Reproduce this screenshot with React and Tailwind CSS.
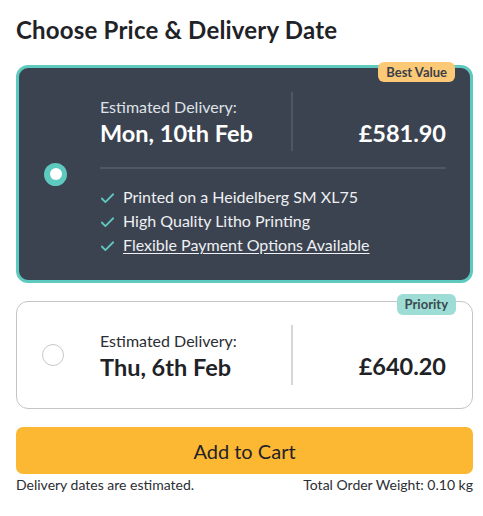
import { Check } from "lucide-react";

const font = { fontFamily: "Lato, 'Noto Sans', sans-serif" };

const features = [
  { text: "Printed on a Heidelberg SM XL75" },
  { text: "High Quality Litho Printing" },
  { text: "Flexible Payment Options Available", link: true },
];

const App = () => {
  return (
    <div
      className="w-[483px] h-[516px] bg-white pl-4 pr-[10px] pt-[15px] text-[#1f2227]"
      style={font}
    >
      <h1 className="text-[24px] leading-[30px] font-bold tracking-[0.2px]">
        Choose Price &amp; Delivery Date
      </h1>

      {/* selected option */}
      <div className="relative mt-[20px] h-[218px] rounded-[12px] border-[3px] border-[#5ec9bf] bg-[#3c4350]">
        <span className="absolute right-[15px] top-[-6px] rounded-[6px] bg-[#fcc977] px-[8px] text-[13px] leading-[20px] font-bold text-[#3a3f49]">
          Best Value
        </span>
        <div className="flex h-full">
          <div className="flex w-[81px] items-center pl-[25px]">
            <span className="flex h-[23px] w-[23px] items-center justify-center rounded-full bg-[#5ec9bf]">
              <span className="h-[12px] w-[12px] rounded-full bg-white" />
            </span>
          </div>
          <div className="flex-1 pr-[24px] pt-[24px]">
            <div className="flex h-[59px] items-stretch">
              <div className="flex w-[191px] flex-col justify-center">
                <p className="text-[16px] leading-[20px] text-[#dfe2e7]">Estimated Delivery:</p>
                <p className="mt-[3px] text-[23.5px] leading-[26px] font-bold text-white">
                  Mon, 10th Feb
                </p>
              </div>
              <div className="w-[2px] bg-[#4e5767]" />
              <div className="flex flex-1 items-center justify-end pt-[22px]">
                <span className="text-[23.5px] leading-[26px] font-bold text-white">£581.90</span>
              </div>
            </div>
            <div className="mt-[16px] h-[2px] bg-[#4e5767]" />
            <ul className="mt-[16px] flex flex-col">
              {features.map((f) => (
                <li key={f.text} className="flex items-center gap-[7px] text-[16px] leading-[24px] text-[#eef0f3]">
                  <Check size={17} strokeWidth={2.5} className="-ml-[1px] mt-[3px] text-[#5ec9bf]" />
                  <span className={f.link ? "underline underline-offset-2" : ""}>{f.text}</span>
                </li>
              ))}
            </ul>
          </div>
        </div>
      </div>

      {/* other option */}
      <div className="relative mt-[18px] h-[108px] rounded-[12px] border border-[#c4c4c4] bg-white">
        <span className="absolute right-[16px] top-[-8px] rounded-[6px] bg-[#9edcd6] px-[8px] text-[13px] leading-[21px] font-bold text-[#3a4a4c]">
          Priority
        </span>
        <div className="flex h-full">
          <div className="flex w-[83px] items-center pl-[25px]">
            <span className="h-[22px] w-[22px] rounded-full border border-[#c8c8c8]" />
          </div>
          <div className="flex flex-1 items-center pr-[26px]">
            <div className="flex h-[60px] flex-1 items-stretch">
              <div className="flex w-[191px] flex-col justify-center">
                <p className="text-[16px] leading-[20px] text-[#2b2e33]">Estimated Delivery:</p>
                <p className="mt-[3px] text-[23.5px] leading-[26px] font-bold">Thu, 6th Feb</p>
              </div>
              <div className="w-[2px] bg-[#d6d6d6]" />
              <div className="flex flex-1 items-center justify-end pt-[22px]">
                <span className="text-[23.5px] leading-[26px] font-bold">£640.20</span>
              </div>
            </div>
          </div>
        </div>
      </div>

      <button className="mt-[18px] h-[47px] w-full rounded-[7px] bg-[#fdb833] text-[20px] text-[#1f2227]">
        Add to Cart
      </button>
      <div className="mt-[3px] flex justify-between text-[14px] leading-[16px] text-[#2b2e33]">
        <span>Delivery dates are estimated.</span>
        <span>Total Order Weight: 0.10 kg</span>
      </div>
    </div>
  );
};

export default App;
